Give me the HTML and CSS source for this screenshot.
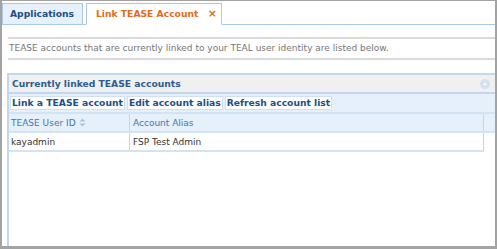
FILE: index.html
```html
<!DOCTYPE html>
<html lang="en">

<head>
    <meta charset="UTF-8">
    <title>Link TEASE Account</title>
    <link rel="stylesheet" href="styles.css">
</head>

<body>
    <div class="window">
        <nav class="tabs">
            <div class="tab">Applications</div>
            <div class="tab active"><span>Link TEASE Account</span><span class="tab-close">&times;</span></div>
        </nav>

        <div class="intro">
            <p>TEASE accounts that are currently linked to your TEAL user identity are listed below.</p>
        </div>

        <section class="panel">
            <div class="panel-header">
                <h2>Currently linked TEASE accounts</h2>
                <span class="collapse-btn">
                    <svg width="10" height="10" viewBox="0 0 10 10"><circle cx="5" cy="5" r="5" fill="#d3e1f1"/><path d="M2.8 6 L5 3.8 L7.2 6 Z" fill="#fff"/></svg>
                </span>
            </div>
            <div class="toolbar">
                <button>Link a TEASE account</button>
                <button>Edit account alias</button>
                <button>Refresh account list</button>
            </div>
            <div class="grid-row grid-head">
                <div class="cell col-id">TEASE User ID
                    <svg class="sort-icon" width="7" height="9" viewBox="0 0 7 9"><path d="M0.5 3.5 L3.5 0.5 L6.5 3.5 Z M0.5 5.5 L3.5 8.5 L6.5 5.5 Z" fill="#a9bfd6"/></svg>
                </div>
                <div class="cell col-alias">Account Alias</div>
            </div>
            <div class="grid-row grid-data">
                <div class="cell col-id">kayadmin</div>
                <div class="cell col-alias">FSP Test Admin</div>
            </div>
        </section>
    </div>
</body>

</html>
```

FILE: styles.css
```css
/* --- Общие --- */
:root {
    --frame-color: #a3a3a3;
    --tab-border: #a9c9ea;
    --tab-bg: #e7f1fb;
    --tab-text: #1d4f84;
    --accent: #e06c1c;
    --line-gray: #dadada;
    --text-gray: #767676;
    --panel-border: #c2d7ec;
    --panel-head-bg: #f0f0f0;
    --light-blue: #e5f0fb;
    --font-family: 'DejaVu Sans', Verdana, sans-serif;
}

html,
body {
    margin: 0;
    height: 249px;
    overflow: hidden;
    background-color: var(--frame-color);
    font-family: var(--font-family);
}

.window {
    margin: 1px 2px 0 2px;
    height: 245px;
    background: #ffffff;
    overflow: hidden;
}

/* --- Вкладки --- */
.tabs {
    display: flex;
    gap: 3px;
    padding-top: 2px;
    border-bottom: 1px solid var(--tab-border);
    height: 21px;
    align-items: flex-end;
}

.tab {
    box-sizing: border-box;
    height: 22px;
    margin-bottom: -1px;
    padding: 0 4px 1px 7px;
    display: flex;
    align-items: center;
    justify-content: space-between;
    font-size: 9.2px;
    font-weight: bold;
    color: var(--tab-text);
    background: var(--tab-bg);
    border: 1px solid var(--tab-border);
    width: 81px;
}

.tab.active {
    width: 136px;
    background: #ffffff;
    color: var(--accent);
    border-bottom-color: #ffffff;
    padding-left: 9px;
}

.tab-close {
    font-size: 11px;
}

/* --- Вступление --- */
.intro {
    margin: 12px 0 0 6px;
    border-top: 2px solid var(--line-gray);
    border-bottom: 2px solid var(--line-gray);
}

.intro p {
    margin: 0;
    height: 19px;
    line-height: 19px;
    padding-left: 1px;
    font-size: 9px;
    color: var(--text-gray);
}

/* --- Панель --- */
.panel {
    margin: 13px -10px 0 5px;
    border-left: 2px solid var(--panel-border);
    border-top: 2px solid var(--panel-border);
    height: 200px;
}

.panel-header {
    display: flex;
    align-items: center;
    height: 17px;
    padding: 0 15px 0 3px;
    background: var(--panel-head-bg);
    border-bottom: 2px solid var(--panel-border);
}

.panel-header h2 {
    margin: 0;
    font-size: 9.2px;
    color: #2c5d91;
}

.collapse-btn {
    margin-left: auto;
    display: flex;
}

.toolbar {
    display: flex;
    gap: 2px;
    padding: 2px 2px 2px 1px;
    background: var(--light-blue);
    border-bottom: 2px solid #d2e3f4;
}

.toolbar button {
    font-family: var(--font-family);
    font-size: 9.2px;
    font-weight: bold;
    color: var(--tab-text);
    background: #ffffff;
    border: 1px solid #cfe0f1;
    padding: 0 1px;
    height: 14px;
    line-height: 12px;
}

/* --- Таблица --- */
.grid-row {
    display: flex;
    font-size: 9px;
}

.grid-head {
    height: 17px;
    background: var(--light-blue);
    border-bottom: 2px solid #d2e3f4;
    color: #4676aa;
}

.grid-data {
    height: 17px;
    width: 475px;
    color: #333333;
    border-bottom: 2px solid #d2e3f4;
}

.cell {
    display: flex;
    align-items: center;
    gap: 3px;
    box-sizing: border-box;
    padding-left: 2px;
    border-right: 1px solid var(--panel-border);
}

.col-id {
    width: 121px;
}

.col-alias {
    width: 354px;
    padding-left: 3px;
}
```
